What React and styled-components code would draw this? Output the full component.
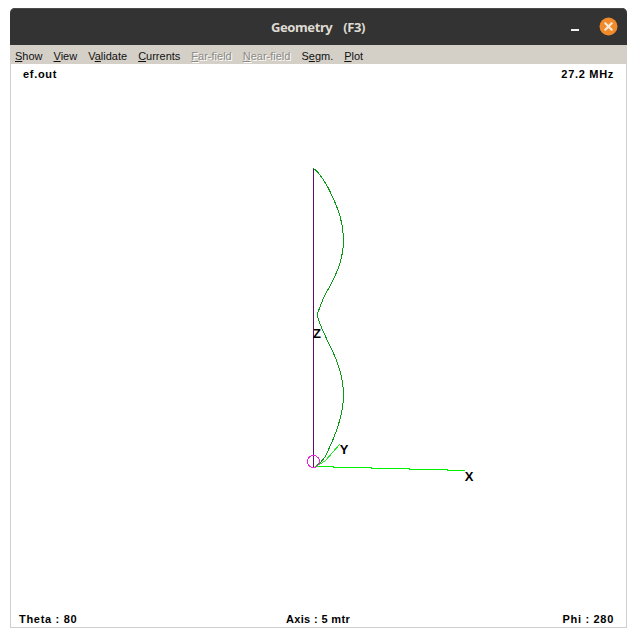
import React from "react";
import styled, { createGlobalStyle } from "styled-components";

const Global = createGlobalStyle`
  html, body { margin: 0; padding: 0; background: #fff; }
  #root { width: 636px; height: 637px; overflow: hidden; }
`;

const Page = styled.div`
  box-sizing: border-box;
  width: 636px;
  height: 637px;
  padding: 8px 9px 9px 10px;
  background: #fff;
`;

const Window = styled.div`
  display: flex;
  flex-direction: column;
  height: 100%;
  box-sizing: border-box;
`;

const TitleBar = styled.header`
  position: relative;
  flex: 0 0 37px;
  display: flex;
  align-items: center;
  justify-content: center;
  box-sizing: border-box;
  background: #333333;
  border-radius: 5px 5px 0 0;
  box-shadow: inset 0 1px 0 #4a4a48;
`;

const Title = styled.h1`
  margin: 0 0 0 -1px;
  font: 700 13px "Noto Sans", "Open Sans", sans-serif;
  letter-spacing: -0.4px;
  word-spacing: 2.5px;
  color: #dfdbd2;
  white-space: pre;
`;

const WindowControls = styled.div`
  position: absolute;
  right: 9px;
  top: 9px;
  display: flex;
  align-items: center;
  gap: 20px;
`;

const MinimizeIcon = styled.span`
  display: block;
  width: 8px;
  height: 2px;
  margin-top: 6px;
  background: #f2f1ef;
`;

const CloseButton = styled.svg`
  display: block;
  width: 19px;
  height: 19px;
`;

const MenuBar = styled.nav`
  flex: 0 0 19px;
  box-sizing: border-box;
  display: flex;
  align-items: center;
  gap: 11px;
  padding: 2px 0 0 5px;
  background: #d4d0c8;
  font: 400 11px "Liberation Sans", Arial, sans-serif;
`;

const MenuItem = styled.span`
  color: ${(p) => (p.$disabled ? "#8c8a85" : "#111")};
  text-shadow: ${(p) => (p.$disabled ? "1px 1px 0 #fff" : "none")};
  white-space: pre;
  u { text-underline-offset: 1px; }
`;

const Canvas = styled.main`
  position: relative;
  flex: 1;
  display: flex;
  flex-direction: column;
  justify-content: space-between;
  box-sizing: border-box;
  background: #fff;
  border: 1px solid #cfcfcf;
  border-top: 0;
  font: 700 11px "Liberation Sans", Arial, sans-serif;
  color: #000;
`;

const InfoRowTop = styled.div`
  display: flex;
  justify-content: space-between;
  padding: 4px 12px 0 12px;
`;

const InfoRowBottom = styled.div`
  display: grid;
  grid-template-columns: 1fr auto 1fr;
  padding: 0 12px 2px 8px;
  & > :last-child { text-align: right; }
`;

const Label = styled.span`
  letter-spacing: 0.7px;
  white-space: pre;
`;

const AxisLabel = styled(Label)`
  margin-left: 3px;
  letter-spacing: 0.35px;
`;

const Drawing = styled.svg`
  position: absolute;
  left: -1px;
  top: -56px;
  width: 617px;
  height: 619px;
  pointer-events: none;
  overflow: visible;
  text { font: 700 13px "Liberation Sans", Arial, sans-serif; fill: #000; }
`;

const curve =
  "M313 168 C320 173 326 182 333 198 C338 209 343.5 222 343.5 240 C343.5 262 334 279 325 295 C321 303 319 310 317 315 C319 323 324 333 328 342 C336 357 343.5 374 343.5 395 C343.5 417 333 441 325 457 C321 463 318 465 315 467";

function Geometry() {
  return (
    <Drawing viewBox="10 8 617 619">
      <line x1="313.5" y1="168" x2="313.5" y2="467" stroke="#5a0f6e" strokeWidth="1" shapeRendering="crispEdges" />
      <path d={curve} fill="none" stroke="#0a9a14" strokeWidth="1" shapeRendering="crispEdges" />
      <polyline points="315,467 325,461 333,452 340,444" fill="none" stroke="#22e622" strokeWidth="1" shapeRendering="crispEdges" />
      <polyline points="315,466.5 333,466.5 333,467.5 371,467.5 371,468.5 409,468.5 409,469.5 447,469.5 447,470.5 465,470.5" fill="none" stroke="#00f000" strokeWidth="1" shapeRendering="crispEdges" />
      <circle cx="313.5" cy="461.5" r="6" fill="none" stroke="#f020e0" strokeWidth="1" shapeRendering="crispEdges" />
      <text x="317" y="338" textAnchor="middle">Z</text>
      <text x="344" y="454" textAnchor="middle">Y</text>
      <text x="469" y="481" textAnchor="middle">X</text>
    </Drawing>
  );
}

export default function App() {
  return (
    <Page>
      <Global />
      <Window>
        <TitleBar>
          <Title>{"Geometry  (F3)"}</Title>
          <WindowControls>
            <MinimizeIcon />
            <CloseButton viewBox="0 0 19 19">
              <circle cx="9.5" cy="9.5" r="9" fill="#f08a2a" />
              <path d="M6.3 6.3 L12.7 12.7 M12.7 6.3 L6.3 12.7" stroke="#f6ead9" strokeWidth="2.2" strokeLinecap="round" />
            </CloseButton>
          </WindowControls>
        </TitleBar>
        <MenuBar>
          <MenuItem><u>S</u>how</MenuItem>
          <MenuItem><u>V</u>iew</MenuItem>
          <MenuItem>V<u>a</u>lidate</MenuItem>
          <MenuItem><u>C</u>urrents</MenuItem>
          <MenuItem $disabled><u>F</u>ar-field</MenuItem>
          <MenuItem $disabled><u>N</u>ear-field</MenuItem>
          <MenuItem>S<u>e</u>gm.</MenuItem>
          <MenuItem><u>P</u>lot</MenuItem>
        </MenuBar>
        <Canvas>
          <InfoRowTop>
            <Label>ef.out</Label>
            <Label>27.2 MHz</Label>
          </InfoRowTop>
          <Geometry />
          <InfoRowBottom>
            <Label>Theta : 80</Label>
            <AxisLabel>Axis : 5 mtr</AxisLabel>
            <Label>Phi : 280</Label>
          </InfoRowBottom>
        </Canvas>
      </Window>
    </Page>
  );
}
